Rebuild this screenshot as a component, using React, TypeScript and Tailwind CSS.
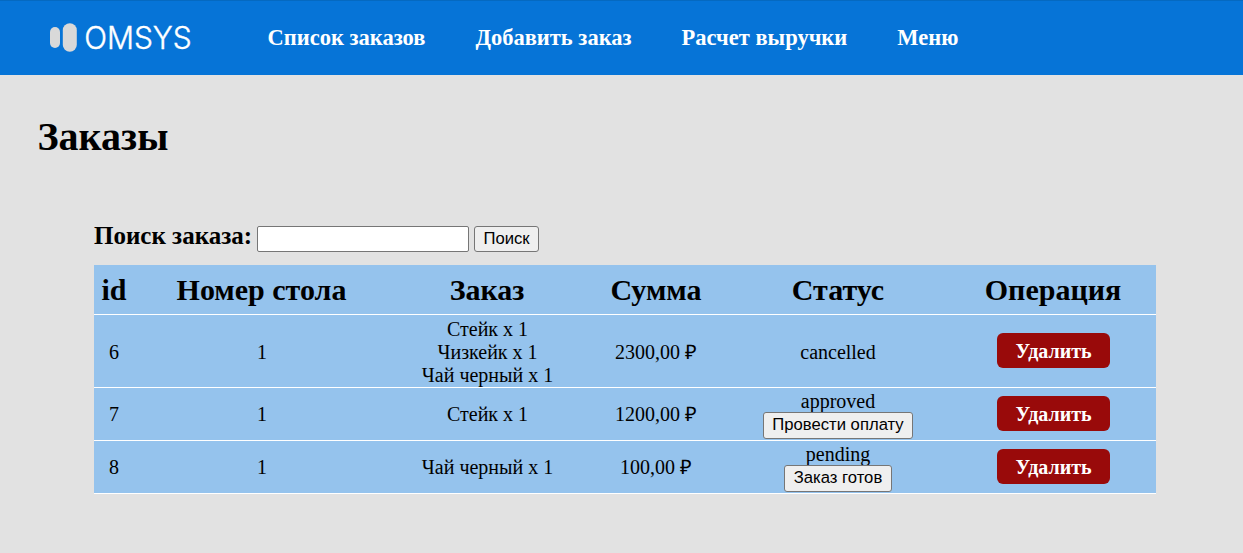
import React from "react";

type Order = {
  id: number;
  table: number;
  items: string[];
  total: string;
  status: string;
  action?: string;
  size: string;
  removePad: string;
};

const orders: Order[] = [
  { id: 6, table: 1, items: ["Стейк x 1", "Чизкейк x 1", "Чай черный x 1"], total: "2300,00 ₽", status: "cancelled", size: "h-[73px] pt-[2px]", removePad: "pb-[3px]" },
  { id: 7, table: 1, items: ["Стейк x 1"], total: "1200,00 ₽", status: "approved", action: "Провести оплату", size: "h-[53px]", removePad: "pb-px" },
  { id: 8, table: 1, items: ["Чай черный x 1"], total: "100,00 ₽", status: "pending", action: "Заказ готов", size: "h-[53px]", removePad: "pb-px" },
];

const nav = ["Список заказов", "Добавить заказ", "Расчет выручки", "Меню"];
const headings = ["id", "Номер стола", "Заказ", "Сумма", "Статус", "Операция"];
const columns = "grid grid-cols-[40px_255px_196px_142px_222px_207px] items-center text-center border-b border-white bg-[#95c3ed]";
const button =
  "flex items-center justify-center rounded-[3px] border border-[#767676] bg-[#efefef] font-['Liberation_Sans',sans-serif] whitespace-nowrap text-black";

function Logo() {
  return (
    <svg width="145" height="42" viewBox="0 -5 145 42" className="shrink-0 overflow-visible">
      <rect x="0" y="5" width="10" height="21" rx="5" fill="#d9d9d9" />
      <rect x="12.8" y="1.2" width="14" height="28.6" rx="7" fill="#d9d9d9" />
      <text x="34.2" y="26.7" fill="#fff" stroke="#fff" strokeWidth="0.4" fontSize="30.5" fontWeight="300" fontFamily="Inter, sans-serif" textLength="107.5" lengthAdjust="spacingAndGlyphs">
        OMSYS
      </text>
    </svg>
  );
}

export default function App() {
  return (
    <div className="h-[553px] overflow-hidden bg-[#e2e2e2] font-['Liberation_Serif',serif] text-black">
      <header className="flex h-[75px] items-center border-t border-[#0569c0] bg-[#0674d7] pl-[50px]">
        <Logo />
        <nav className="mt-[-2px] ml-[72.5px] flex gap-[50px] text-[22.5px] leading-[25px] font-bold text-white">
          {nav.map((label) => (
            <a key={label} href="#" className="whitespace-nowrap">{label}</a>
          ))}
        </nav>
      </header>
      <main>
        <h1 className="pt-[39px] pl-[37.5px] text-[40px] leading-[46px] font-bold">Заказы</h1>
        <section className="mt-[65px] ml-[94px] w-[1062px]">
          <form className="flex h-[27px] items-center">
            <label htmlFor="search" className="mt-[-6px] w-[163px] text-[25px] leading-[28px] font-bold whitespace-nowrap">Поиск заказа:</label>
            <input id="search" className="h-[26px] w-[212px] rounded-[2px] border border-[#767676] bg-white px-1" />
            <button type="button" className={`${button} ml-[5px] h-[26px] w-[65px] text-[16.667px]`}>Поиск</button>
          </form>
          <div className="mt-[13px]">
            <div className={`${columns} h-[50px] text-[30px] leading-[34px] font-bold`}>
              {headings.map((h) => (
                <div key={h} className="whitespace-nowrap last:pl-px">{h}</div>
              ))}
            </div>
            {orders.map((o) => (
              <div key={o.id} className={`${columns} ${o.size} text-[20px] leading-[23px]`}>
                <div>{o.id}</div>
                <div className="pl-px">{o.table}</div>
                <div className="pl-px">
                  {o.items.map((item) => (
                    <div key={item}>{item}</div>
                  ))}
                </div>
                <div>{o.total}</div>
                <div className="flex flex-col items-center">
                  <span>{o.status}</span>
                  {o.action && (
                    <button type="button" className={`${button} mt-[-1px] h-[27px] px-[8.5px] text-[16.667px] leading-[18px]`}>{o.action}</button>
                  )}
                </div>
                <div className={`flex justify-center pl-[2px] ${o.removePad}`}>
                  <button type="button" className="h-[35px] w-[113px] rounded-[6px] bg-[#990a0a] pt-px font-bold text-white">Удалить</button>
                </div>
              </div>
            ))}
          </div>
        </section>
      </main>
    </div>
  );
}
